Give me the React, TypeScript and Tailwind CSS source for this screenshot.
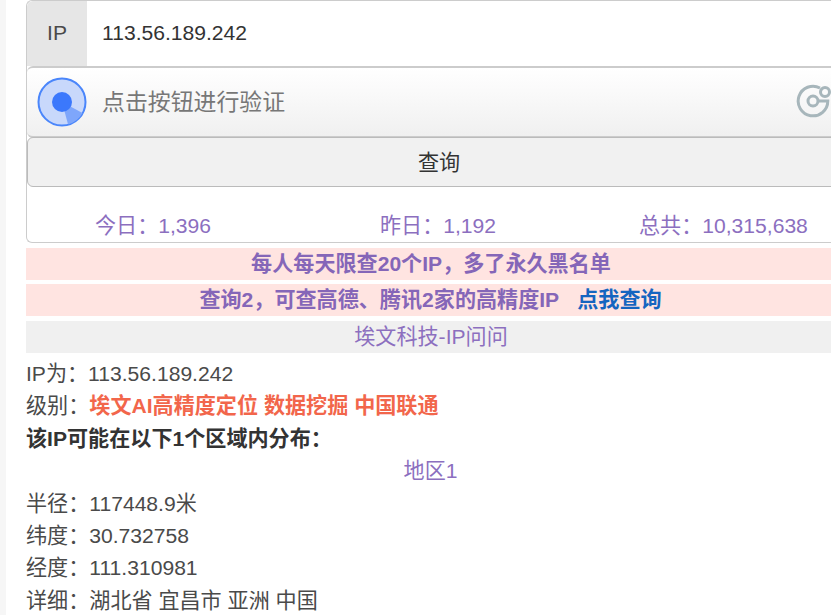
export default function App() {
  const font = { fontFamily: '"Liberation Sans", "Noto Sans CJK SC", sans-serif' };
  return (
    <div style={font} className="w-[831px] h-[615px] overflow-hidden bg-white flex text-[21.1px] leading-[32.4px] text-[#4a4a4a]">
      <div className="w-[6px] shrink-0 bg-[#f6f6f6]" />
      <div className="w-[20px] shrink-0" />
      <div className="w-[830px] shrink-0">
        <div className="h-[243px] border border-[#cccccc] rounded-[6px] border-r-0">
          <div className="h-[65px] flex">
            <div className="w-[60px] bg-[#e6e6e6] flex items-center justify-center rounded-tl-[6px]">IP</div>
            <div className="flex-1 flex items-center pl-[15px] text-[#333333]">113.56.189.242</div>
          </div>
          <div className="h-[72px] flex items-center border-y-2 border-[#cccccc] rounded-[6px] bg-gradient-to-b from-[#ffffff] to-[#f0f0f0] pl-[10px]">
            <svg width="50" height="50" viewBox="0 0 50 50" className="shrink-0">
              <circle cx="25" cy="25" r="23.5" fill="#c8d8fb" stroke="#4a86fb" strokeWidth="2" />
              <path d="M25 25 L45.5 36 A23 23 0 0 1 31 47.3 Z" fill="#7ea6fb" />
              <circle cx="25" cy="25" r="10" fill="#3b78fc" />
            </svg>
            <span className="ml-[15px] text-[22.9px] text-[#777777]">点击按钮进行验证</span>
            <div className="ml-[511px] shrink-0">
              <svg width="38" height="36" viewBox="0 0 38 36" className="block">
                <path d="M24 4 A14.8 14.8 0 1 0 31.8 17 L22 17" fill="none" stroke="#a7b6bb" strokeWidth="3" />
                <circle cx="17" cy="17" r="5" fill="none" stroke="#a7b6bb" strokeWidth="3" />
                <circle cx="29" cy="8" r="4.5" fill="#fbfbfb" stroke="#a7b6bb" strokeWidth="3" />
              </svg>
            </div>
          </div>
          <div className="h-[50px] flex items-center justify-center border border-[#bbbbbb] rounded-[6px] bg-[#f1f1f1] text-[#333333] -mt-px pr-[2px]">
            <span className="mr-[3px] mt-[2px]">查询</span>
          </div>
          <div className="h-[55px] pt-[23px] text-[#8c6fbf] flex">
            <span className="ml-[68px] w-[285px]">今日：1,396</span>
            <span className="w-[259px]">昨日：1,192</span>
            <span>总共：10,315,638</span>
          </div>
        </div>
        <div className="h-[32px] mt-[5px] bg-[#ffe4e1] text-[#8566b8] font-bold">
          <div className="w-[810px] h-full flex items-center justify-center pt-[1px]">每人每天限查20个IP，多了永久黑名单</div>
        </div>
        <div className="h-[32px] mt-[4px] bg-[#ffe4e1] text-[#8566b8] font-bold">
          <div className="w-[809px] h-full flex items-center justify-center pt-[1px]">
            查询2，可查高德、腾讯2家的高精度IP<span className="ml-[18px] text-[#1565c0]">点我查询</span>
          </div>
        </div>
        <div className="h-[32px] mt-[5px] bg-[#f0f0f0] text-[#8c6fbf]">
          <div className="w-[810px] h-full flex items-center justify-center pt-[1px]">埃文科技-IP问问</div>
        </div>
        <div className="pt-[5px]">
          <div>IP为：113.56.189.242</div>
          <div>级别：<span className="font-bold text-[#f2664b]">埃文AI高精度定位 数据挖掘 中国联通</span></div>
          <div className="font-bold text-[#333333]">该IP可能在以下1个区域内分布：</div>
          <div className="w-[809px] text-center text-[#8c6fbf]">地区1</div>
          <div>半径：117448.9米</div>
          <div>纬度：30.732758</div>
          <div>经度：111.310981</div>
          <div>详细：湖北省 宜昌市 亚洲 中国</div>
        </div>
      </div>
    </div>
  );
}
